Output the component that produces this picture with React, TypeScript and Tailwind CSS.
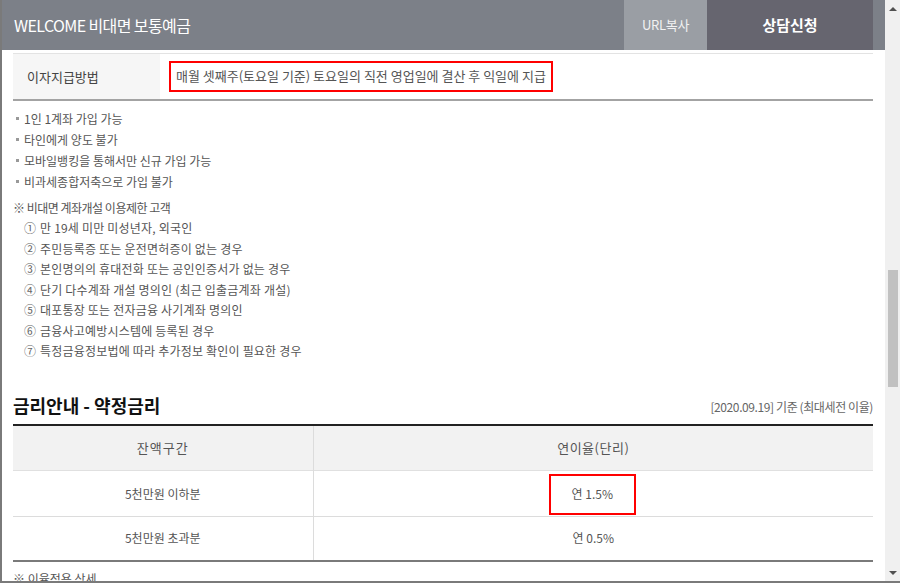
import React from 'react';

const bullets = ['1인 1계좌 가입 가능', '타인에게 양도 불가', '모바일뱅킹을 통해서만 신규 가입 가능', '비과세종합저축으로 가입 불가'];

const limits = [
  '만 19세 미만 미성년자, 외국인',
  '주민등록증 또는 운전면허증이 없는 경우',
  '본인명의의 휴대전화 또는 공인인증서가 없는 경우',
  '단기 다수계좌 개설 명의인 (최근 입출금계좌 개설)',
  '대포통장 또는 전자금융 사기계좌 명의인',
  '금융사고예방시스템에 등록된 경우',
  '특정금융정보법에 따라 추가정보 확인이 필요한 경우',
];

const marks = ['①', '②', '③', '④', '⑤', '⑥', '⑦'];

export default function App() {
  return (
    <div
      className="w-[900px] h-[583px] overflow-hidden flex bg-white border-l-2 border-b-2 border-[#7a7a7a] text-[#555]"
      style={{ fontFamily: '"Noto Sans CJK KR", "Noto Sans", sans-serif' }}
    >
      {/* main column */}
      <div className="flex-1 flex flex-col min-w-0">
        {/* Title bar */}
        <header className="h-[50px] shrink-0 flex bg-[#7c8088] pl-[12px] pr-[12px]">
          <div className="flex-1 flex items-center text-[16px] text-white tracking-[-0.6px]">WELCOME 비대면 보통예금</div>
          <div className="w-[83px] flex items-center justify-center bg-[#9a9ea4] text-[13px] text-[#f2f2f2] tracking-[-0.3px]">URL복사</div>
          <div className="w-[166px] flex items-center justify-center bg-[#66656f] text-[15px] font-bold text-white">상담신청</div>
        </header>

        <div className="pl-[11px] pr-[12px] pt-[3px] flex flex-col">
          {/* Interest payment row */}
          <div className="flex h-[48px] border-t border-[#e3e3e3] border-b-2 border-b-[#a3a3a3]">
            <div className="w-[147px] bg-[#f6f6f6] flex items-center pl-[14px] text-[13px] text-[#444]">이자지급방법</div>
            <div className="flex-1 flex items-center pl-[9px]">
              <span className="h-[31px] mt-[-1px] flex items-center border-2 border-[#ff0000] px-[5px] text-[13px] text-[#555]">
                매월 셋째주(토요일 기준) 토요일의 직전 영업일에 결산 후 익일에 지급
              </span>
            </div>
          </div>

          {/* Notes */}
          <ul className="mt-[7px] flex flex-col text-[12px] leading-[21px]">
            {bullets.map((b) => (
              <li key={b} className="flex items-center">
                <span className="w-[3px] h-[3px] bg-[#999] ml-[3px] mr-[5px]"></span>
                {b}
              </li>
            ))}
          </ul>
          <p className="mt-[5px] text-[12px] leading-[21px] tracking-[-0.5px]">※ 비대면 계좌개설 이용제한 고객</p>
          <ol className="flex flex-col text-[12px] leading-[20.5px] pl-[11px] tracking-[0.2px]">
            {limits.map((l, i) => (
              <li key={l} className="flex">
                <span className="w-[16px] text-[#666]">{marks[i]}</span>
                {l}
              </li>
            ))}
          </ol>

          {/* Rate section */}
          <div className="mt-[31px] flex items-end justify-between">
            <h2 className="text-[18px] font-bold text-[#111] leading-[24px]">금리안내 - 약정금리</h2>
            <span className="text-[12px] text-[#666] leading-[20px] tracking-[-0.4px]">[2020.09.19] 기준 (최대세전 이율)</span>
          </div>

          <table className="mt-[7px] w-full border-collapse text-[12px]">
            <thead>
              <tr className="h-[46px] bg-[#f2f2f2] border-t-2 border-[#222] border-b border-b-[#e0e0e0]">
                <th className="w-[300px] font-normal text-[13px] text-[#555] tracking-[1px] border-r border-[#dcdcdc]">잔액구간</th>
                <th className="font-normal text-[13px] text-[#555] tracking-[0.5px]">연이율(단리)</th>
              </tr>
            </thead>
            <tbody>
              <tr className="h-[46px] border-b border-[#dcdcdc]">
                <td className="text-center border-r border-[#dcdcdc]">5천만원 이하분</td>
                <td className="text-center">
                  <span className="inline-flex w-[87px] h-[41px] items-center justify-center border-2 border-[#ff0000] mt-[1px] mr-[2px]">연 1.5%</span>
                </td>
              </tr>
              <tr className="h-[44px] border-b-2 border-[#7a7a7a]">
                <td className="text-center border-r border-[#dcdcdc]">5천만원 초과분</td>
                <td className="text-center">연 0.5%</td>
              </tr>
            </tbody>
          </table>
          <p className="mt-[7px] text-[12px] leading-[20px]">※ 이율적용 상세</p>
        </div>
      </div>

      {/* scrollbar */}
      <div className="w-[15px] shrink-0 bg-[#f0f0f0] flex flex-col items-center">
        <div className="h-[17px] flex items-center justify-center">
          <div className="w-0 h-0 border-l-[4px] border-r-[4px] border-b-[4px] border-l-transparent border-r-transparent border-b-[#505050]"></div>
        </div>
        <div className="mt-[253px] w-[10px] h-[117px] bg-[#c1c1c1]"></div>
        <div className="flex-1"></div>
        <div className="h-[17px] flex items-center justify-center">
          <div className="w-0 h-0 border-l-[4px] border-r-[4px] border-t-[4px] border-l-transparent border-r-transparent border-t-[#505050]"></div>
        </div>
      </div>
    </div>
  );
}
